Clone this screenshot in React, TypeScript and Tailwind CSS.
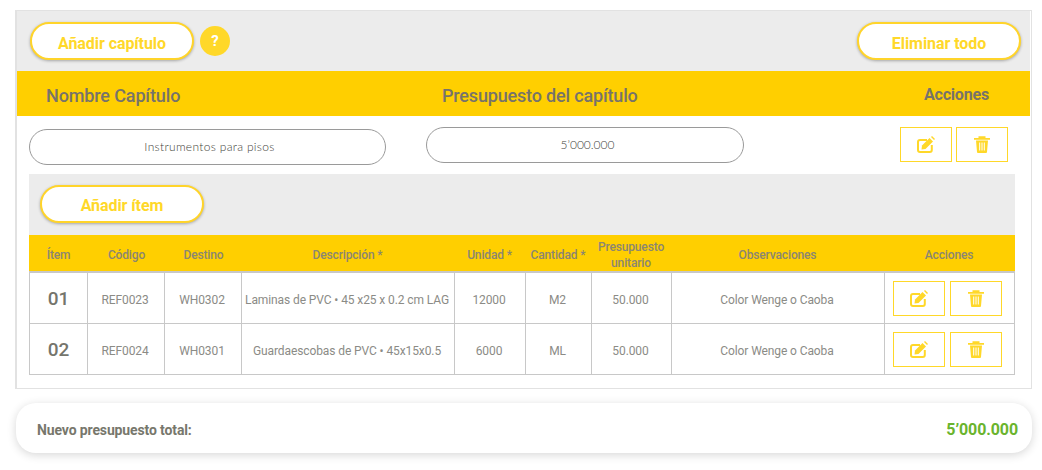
import React from "react";

const Edit = () => (
  <svg width="18" height="17" viewBox="0 0 18 17" className="block">
    <path d="M14.800 9v5a2 2 0 0 1-2 2H3a2 2 0 0 1-2-2V6a2 2 0 0 1 2-2h7" fill="none" stroke="#ffd829" strokeWidth="2" />
    <path d="M5 9.500 12.500 2l3.500 3.500L8.500 13 4.500 13.500z" fill="#ffd829" />
    <path d="M14 1l1-1 3 3-1 1z" fill="#ffd829" />
  </svg>
);
const Trash = () => (
  <svg width="16" height="17" viewBox="0 0 16 17" className="block">
    <path d="M4.500 2V.300h7V2H16v1.700H0V2z" fill="#ffd829" />
    <path fillRule="evenodd" d="M2 4.500h12l-1 11.500a1 1 0 0 1-1 1H4a1 1 0 0 1-1-1zM5.200 6.500v8h1v-8zM7.500 6.500v8h1v-8zM9.800 6.500v8h1v-8z" fill="#ffd829" />
  </svg>
);

const Pill = ({ label }: { label: string }) => (
  <button className="h-[38px] w-[164px] rounded-[19px] border-2 border-[#ffd42a] bg-white pt-[5px] text-[16px] font-bold tracking-[-0.07px] text-[#ffd829] shadow-[0_1px_3px_rgba(0,0,0,0.3)]">
    {label}
  </button>
);
const IconBtn = ({ children }: { children: React.ReactNode }) => (
  <button className="flex h-[35px] w-[52px] items-center justify-center border border-[#ffd829] bg-white">{children}</button>
);

const heads: React.ReactNode[] = ["Ítem", "Código", "Destino", "Descripción *", "Unidad *", "Cantidad *", <>Presupuesto<br />unitario</>, "Observaciones", "Acciones"];
const rows = [
  ["01", "REF0023", "WH0302", "Laminas de PVC • 45 x25 x 0.2 cm LAG", "12000", "M2", "50.000", "Color Wenge o Caoba"],
  ["02", "REF0024", "WH0301", "Guardaescobas de PVC • 45x15x0.5", "6000", "ML", "50.000", "Color Wenge o Caoba"],
];
const cols = "grid grid-cols-[59px_77px_77px_213px_71px_66px_80px_213px_130px]";

export default function App() {
  return (
    <div className="h-[470px] w-[1042px] overflow-hidden bg-white pl-[15px] pr-[10px] pt-[10px] font-['Roboto',sans-serif]">
      <div className="h-[379px] border-y border-r border-l-2 border-[#e2e2e2] pr-px">
        <div className="flex h-[60px] items-center justify-between bg-[#ececec] pl-[13px] pr-[9px]">
          <div className="flex items-center gap-[6px]">
            <Pill label="Añadir capítulo" />
            <span className="flex h-[30px] w-[30px] items-center justify-center rounded-full bg-[#ffd829] pt-px text-[15px] font-bold text-white">?</span>
          </div>
          <Pill label="Eliminar todo" />
        </div>
        <div className="grid h-[45px] grid-cols-[397px_468px_1fr] items-center bg-[#ffcf00] pt-[3px] text-[#77736a]">
          <span className="pl-[29px] text-[18px] font-medium tracking-[-0.13px]">Nombre Capítulo</span>
          <span className="pl-[28px] text-[18px] font-medium tracking-[-0.17px]">Presupuesto del capítulo</span>
          <span className="pl-[42px] text-[16px] font-bold tracking-[-0.2px]">Acciones</span>
        </div>
        <div className="flex h-[58px] items-center bg-white pl-[12px]">
          <div className="mt-[4px] flex h-[36px] w-[357px] items-center justify-center rounded-[18px] border border-[#9a9a9a] pl-[4px] font-['Lato',sans-serif] text-[12px] font-light tracking-[0.32px] text-[#3f3f3a]">Instrumentos para pisos</div>
          <div className="ml-[40px] flex h-[36px] w-[318px] items-center justify-center rounded-[18px] border border-[#9a9a9a] pl-[5px] font-['Lato',sans-serif] text-[12px] font-light text-[#3f3f3a]">5’000.000</div>
          <div className="ml-[156px] -mt-[1px] flex gap-[4px]">
            <IconBtn><Edit /></IconBtn>
            <IconBtn><Trash /></IconBtn>
          </div>
        </div>
        <div className="ml-[12px] mr-[15px]">
          <div className="flex h-[61px] items-center bg-[#ececec] pb-[2px] pl-[11px]">
            <Pill label="Añadir ítem" />
          </div>
          <div className={`${cols} h-[38px] items-center border-b-2 border-[#c8c8c8] bg-[#ffcf00] pt-[3px] text-center text-[12px] font-medium leading-[16px] tracking-[-0.15px] text-[#8b8672]`}>
            {heads.map((h, i) => <span key={i} className={i > 2 ? "pr-[2px]" : ""}>{h}</span>)}
          </div>
          {rows.map((r) => (
            <div key={r[0]} className={`${cols} h-[51px] border-b border-[#c8c8c8] text-center text-[12px] tracking-[-0.1px] text-[#8b8b86]`}>
              {r.map((c, i) => (
                <div key={i} className={`flex items-center justify-center border-r border-[#c8c8c8] pt-[3px] ${i === 0 ? "border-l text-[19px] font-medium text-[#75756c]" : "pr-[2px]"}`}>{c}</div>
              ))}
              <div className="flex items-center justify-center gap-[5px] border-r border-[#c8c8c8] pr-[4px]">
                <IconBtn><Edit /></IconBtn>
                <IconBtn><Trash /></IconBtn>
              </div>
            </div>
          ))}
        </div>
      </div>
      <div className="ml-px mt-[14px] flex h-[50px] w-[1016px] items-center justify-between rounded-[20px] bg-white pl-[21px] pr-[14px] pt-[4px] shadow-[0_2px_10px_rgba(0,0,0,0.16)]">
        <span className="text-[14px] font-bold tracking-[-0.13px] text-[#77776c]">Nuevo presupuesto total:</span>
        <span className="text-[16px] font-bold tracking-[-0.1px] text-[#6ab42d]">5’000.000</span>
      </div>
    </div>
  );
}
